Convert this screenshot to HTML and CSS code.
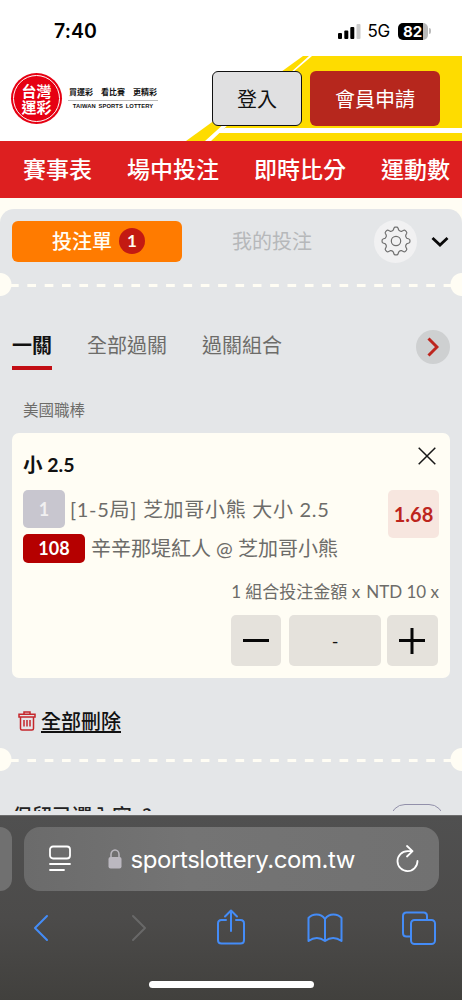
FILE: index.html
```html
<!DOCTYPE html>
<html lang="zh-Hant">
<head>
<meta charset="utf-8">
<meta name="viewport" content="width=device-width">
<title>台灣運彩</title>
<link rel="stylesheet" href="styles.css">
</head>
<body>
<div class="phone">
  <div class="status">
    <span class="time">7:40</span>
    <span class="signals">
      <svg class="bars" width="24" height="15" viewBox="0 0 24 15"><rect x="1" y="9" width="4" height="6" rx="1"/><rect x="7.3" y="6.5" width="4" height="8.5" rx="1"/><rect x="13.3" y="3" width="4" height="12" rx="1"/><rect x="19.5" y="0" width="4" height="15" rx="1" fill="#ccc"/></svg>
      <span class="net">5G</span>
      <span class="battery"><span class="level">82</span></span><i class="cap"></i>
    </span>
  </div>

  <header class="header">
    <svg class="stripes" width="462" height="85" viewBox="0 0 462 85"><path d="M303 0H462V85H186Z" fill="#fedc00"/><path d="M309 0H312L292 17 231 66 211 85H205L226 66 290 17Z" fill="#fff"/><path d="M225 72H462V77H217Z" fill="#fff"/></svg>
    <div class="logo">
      <div class="seal"><div class="seal-text"><span>台灣</span><span>運彩</span></div></div>
      <div class="slogan"><div class="zh"><span>買運彩</span><span>看比賽</span><span>更精彩</span></div><div class="en">TAIWAN SPORTS LOTTERY</div></div>
    </div>
    <button class="login">登入</button>
    <button class="join">會員申請</button>
  </header>

  <nav class="nav"><span>賽事表</span><span>場中投注</span><span>即時比分</span><span>運動數</span></nav>

  <main class="slip">
    <div class="top">
      <div class="bet-tab">投注單<b>1</b></div>
      <div class="my-bets">我的投注</div>
      <div class="gear"><svg width="30" height="30" viewBox="-15 -15 30 30" fill="none" stroke="#707070" stroke-width="1.200" stroke-linejoin="round"><circle r="4.700"/><path d="M-2.800 -10.800L-2 -13Q-1.700 -13.900 -.8 -13.900H.8Q1.700 -13.900 2 -13L2.800 -10.800Q4.200 -9.300 5.800 -9.700L7.800 -10.700Q8.700 -11 9.400 -10.300L10.300 -9.400Q11 -8.700 10.700 -7.800L9.700 -5.800Q9.300 -4.200 10.800 -2.800L13 -2Q13.900 -1.700 13.900 -.8V.8Q13.900 1.700 13 2L10.800 2.800Q9.300 4.200 9.700 5.800L10.700 7.800Q11 8.700 10.300 9.400L9.400 10.300Q8.700 11 7.800 10.700L5.800 9.700Q4.200 9.300 2.800 10.800L2 13Q1.700 13.900 .8 13.900H-.8Q-1.700 13.900 -2 13L-2.800 10.800Q-4.200 9.300 -5.800 9.700L-7.800 10.700Q-8.700 11 -9.400 10.300L-10.300 9.400Q-11 8.700 -10.700 7.800L-9.700 5.800Q-9.300 4.200 -10.800 2.800L-13 2Q-13.900 1.700 -13.900 .8V-.8Q-13.900 -1.700 -13 -2L-10.800 -2.800Q-9.300 -4.200 -9.700 -5.800L-10.700 -7.800Q-11 -8.700 -10.300 -9.400L-9.400 -10.300Q-8.700 -11 -7.800 -10.700L-5.800 -9.700Q-4.200 -9.300 -2.800 -10.800Z"/></svg></div>
      <svg class="chev" width="18" height="12" viewBox="0 0 18 12"><path d="M1.500 2 9 9 16.500 2" fill="none" stroke="#090909" stroke-width="2.800"/></svg>
    </div>
    <div class="perforation"></div>
    <div class="types"><span class="active">一關</span><span>全部過關</span><span>過關組合</span><div class="next"><svg width="12" height="20" viewBox="0 0 12 20"><path d="M1.500 1.500 10 10 1.500 18.500" fill="none" stroke="#bd261f" stroke-width="3"/></svg></div></div>
    <div class="league">美國職棒</div>
    <section class="card">
      <div class="pick"><h2>小 2.5</h2><svg width="18" height="18" viewBox="0 0 18 18"><path d="M.7.7 17.300 17.300M17.300.7.7 17.300" stroke="#171717" stroke-width="1.500"/></svg></div>
      <div class="game">
        <div class="lines">
          <div class="line"><span class="num gray">1</span><span class="market">[1-5局] 芝加哥小熊 大小 2.5</span></div>
          <div class="line second"><span class="num red">108</span><span class="teams">辛辛那堤紅人 @ 芝加哥小熊</span></div>
        </div>
        <span class="odds">1.68</span>
      </div>
      <div class="amount"><span class="combo">1 組合投注金額 x</span><span class="unit">NTD 10 x</span></div>
      <div class="stepper">
        <span class="step"><svg width="26" height="26" viewBox="0 0 26 26"><path d="M0 12.500H26" stroke="#070707" stroke-width="3"/></svg></span>
        <span class="value">-</span>
        <span class="step"><svg width="26" height="26" viewBox="0 0 26 26"><path d="M0 12.500H26M13 0V26" stroke="#070707" stroke-width="3"/></svg></span>
      </div>
    </section>
    <div class="delete"><svg width="18" height="20" viewBox="0 0 18 20" fill="none" stroke="#c5262b" stroke-width="1.500"><path d="M1 6V3.200H17V6ZM6 3V1H12V3M2.500 6V17.500Q2.500 19 4 19H14Q15.500 19 15.500 17.500V6M6 9V15.500M9 9V15.500M12 9V15.500"/></svg><span>全部刪除</span></div>
    <div class="perforation"></div>
    <div class="keep"><span>保留已選內容</span><span class="mark">?</span><i></i></div>
  </main>

  <footer class="browser">
    <div class="address-row">
      <div class="prev-page"></div>
      <div class="address">
        <svg class="menu" width="22" height="28" viewBox="0 0 22 28" fill="none" stroke="#fff" stroke-width="1.800" stroke-linecap="round"><rect x="1" y="1.500" width="20" height="12" rx="3"/><path d="M1 19H21M1 25H15"/></svg>
        <svg class="lock" width="14" height="20" viewBox="0 0 14 20"><rect x=".5" y="8" width="13" height="11.500" rx="2" fill="#bbb8c0"/><path d="M3 9V5.500a4 4.500 0 0 1 8 0V9" fill="none" stroke="#bbb8c0" stroke-width="1.500"/></svg>
        <span class="url">sportslottery.com.tw</span>
        <svg class="reload" width="23" height="28" viewBox="0 0 23 28" fill="none" stroke="#fff" stroke-width="1.800" stroke-linecap="round" stroke-linejoin="round"><path d="M16 6.100H11.500A10 10 0 1 0 21.500 16M11 1 16.500 6.200 11 11.500"/></svg>
      </div>
    </div>
    <div class="tools">
      <svg width="16" height="28" viewBox="0 0 16 28"><path d="M14 2 2 14 14 26"/></svg>
      <svg class="dim" width="16" height="28" viewBox="0 0 16 28"><path d="M2 2 14 14 2 26"/></svg>
      <svg class="share" width="30" height="36" viewBox="-1 0 30 36"><path d="M9 11H4.500Q1 11 1 14.500V31Q1 34.500 4.500 34.500H23.500Q27 34.500 27 31V14.500Q27 11 23.500 11H19M14 22V1.500M8 7.500 14 1.500 20 7.500"/></svg>
      <svg class="book" width="36" height="30" viewBox="0 0 36 30"><path d="M18 6Q15 1.500 9.500 1.500 4.500 1.500 1.500 5V28Q10 22 18 28V6Q21 1.500 26.500 1.500 31.500 1.500 34.500 5V28Q26 22 18 28"/></svg>
      <svg class="windows" width="34" height="34" viewBox="0 0 34 34"><path d="M8.500 25.500H4.500Q1 25.500 1 22V5Q1 1.500 4.500 1.500H21.500Q25 1.500 25 5V8.500"/><rect x="9" y="9" width="24" height="24" rx="3.500"/></svg>
    </div>
    <div class="home"></div>
  </footer>
</div>
</body>
</html>
```
FILE: styles.css
```css
* { box-sizing: border-box; }
body { margin: 0; font-family: Lato, "Noto Sans CJK TC", sans-serif; color: #6d6c69; }
svg { display: block; flex: none; }
.phone { width: 462px; height: 1000px; overflow: hidden; background: #fffdf4; display: flex; flex-direction: column; white-space: nowrap; }
.phone > * { flex: none; }

.status { height: 56px; padding: 21px 31px 0 54px; background: #fff; display: flex; justify-content: space-between; color: #000; font-family: Inter, sans-serif; }
.time { font-size: 19.500px; line-height: 21px; font-weight: 600; letter-spacing: .1px; }
.signals { display: flex; height: 20px; align-items: center; }
.net { margin: 0 8px 0 7px; font-size: 17px; letter-spacing: -.3px; }
.battery { width: 30px; height: 17px; border-radius: 5px; background: linear-gradient(90deg, #000 25px, #b9b9b9 25px); color: #fff; }
.level { display: block; padding-left: 5px; font-size: 15px; line-height: 17px; font-weight: 700; }
.cap { width: 2px; height: 6px; margin-left: 1px; border-radius: 0 2px 2px 0; background: #bbb; }

.header { position: relative; height: 85px; padding: 15px 22px 0 11px; background: #fff; display: flex; align-items: flex-start; }
.stripes { position: absolute; left: 0; top: 0; }
.logo { position: relative; width: 201px; display: flex; align-items: center; gap: 6px; padding-top: 2px; }
.seal { width: 51px; height: 51px; padding: 2px; border-radius: 50%; background: #e60012; }
.seal-text { height: 47px; border: 1px solid #fff; border-radius: 50%; color: #fff; font-size: 15px; font-weight: 700; display: flex; flex-direction: column; align-items: center; justify-content: center; }
.seal-text span { height: 16px; line-height: 16px; }
.slogan { width: 90px; color: #111; }
.zh { display: flex; justify-content: space-between; padding: 0 1px 2px; border-bottom: 1.500px solid #bbb; font-size: 8px; line-height: 11px; font-weight: 700; }
.en { padding-top: 2px; text-align: center; font: 700 5.800px/7px "Liberation Sans", sans-serif; letter-spacing: .1px; word-spacing: 1px; }
button { position: relative; padding: 0; font: 20px/50px Lato, "Noto Sans CJK TC", sans-serif; border-radius: 6px; }
.login { width: 90px; height: 55px; border: 1.500px solid #111; background: #e0e0e1; color: #111; }
.join { width: 130px; height: 55px; margin-left: 8px; border: 0; background: #b6271d; color: #fff; }

.nav { height: 57px; padding: 0 12px 4px 23px; display: flex; align-items: center; justify-content: space-between; background: #dd1f20; color: #fff; font-size: 23px; font-weight: 500; }

.slip { height: 606px; margin-top: 11px; border-radius: 14px 14px 0 0; background: #e4e6e8; overflow: hidden; }
.top { height: 64px; padding: 0 13px 0 12px; display: flex; align-items: center; }
.bet-tab { width: 170px; height: 41px; border-radius: 6px; background: #ff7b00; color: #fffdf4; display: flex; align-items: center; justify-content: center; gap: 7px; padding: 0 0 1px 3px; font-size: 20px; font-weight: 500; }
.bet-tab b { width: 26px; height: 26px; border-radius: 50%; background: #c31a12; font-size: 17px; line-height: 26px; font-weight: 700; text-align: center; }
.my-bets { margin-left: 50px; padding-bottom: 1px; color: #b6b8ba; font-size: 20px; }
.gear { width: 43px; height: 43px; margin-left: 62px; border-radius: 50%; background: #f1f1f2; display: grid; place-items: center; }
.chev { margin-left: 14px; margin-top: 2px; }
.perforation { height: 23px; background: radial-gradient(circle at 0 50%, #fffdf4 11px, transparent 12px), radial-gradient(circle at 100% 50%, #fffdf4 11px, transparent 12px), linear-gradient(90deg, #fffdf4 9px, transparent 9px) 10px 11px / 17.350px 3px repeat-x; }
.types { height: 74px; margin-top: 33px; padding: 0 12px; display: flex; align-items: flex-start; gap: 35px; font-size: 20px; line-height: 33px; }
.active { height: 41px; border-bottom: 4px solid #c20e14; color: #111; font-weight: 700; }
.next { width: 34px; height: 34px; margin: 1px 0 0 auto; border-radius: 50%; background: #ced0d1; display: grid; place-items: center; }
.league { height: 30px; padding-left: 23px; font-size: 15.500px; line-height: 14px; }
.card { height: 245px; margin: 0 12px; padding: 14px 11px 12px; border-radius: 7px; background: #fffdf4; }
.pick { height: 43px; display: flex; justify-content: space-between; }
.pick svg { margin: 0 3px 0 0; }
h2 { margin: 3px 0 0; color: #111; font-size: 19.500px; line-height: 29px; font-weight: 700; }
.game { display: flex; justify-content: space-between; }
.line { height: 38px; display: flex; align-items: center; font-size: 20px; }
.second { height: 30px; margin-top: 5px; }
.num { border-radius: 5px; color: #fff; font-size: 18px; font-weight: 700; text-align: center; }
.gray { width: 42px; height: 38px; background: #c8c6cf; color: #f1f0f1; line-height: 38px; }
.red { width: 62px; height: 29px; background: #b50000; line-height: 29px; }
.market { margin-left: 5px; padding-bottom: 1px; letter-spacing: .7px; }
.teams { margin-left: 6px; padding-bottom: 2px; }
.odds { width: 51px; height: 48px; border-radius: 5px; background: #f7e6df; color: #bd251d; text-align: center; font-size: 20px; line-height: 49px; font-weight: 700; }
.amount { height: 24px; margin-top: 17px; display: flex; justify-content: flex-end; gap: 6px; font-size: 17px; line-height: 23px; }
.stepper { margin-top: 11px; display: flex; justify-content: flex-end; gap: 6px; padding-right: 1.500px; }
.step, .value { height: 51px; border-radius: 5px; background: #e5e2dc; display: grid; place-items: center; color: #111; }
.step { width: 50.500px; }
.value { width: 92px; margin-left: 2px; font-size: 18px; }
.delete { height: 70px; padding: 28px 0 0 18px; display: flex; gap: 5px; color: #111; font-size: 20px; line-height: 31px; font-weight: 500; }
.delete svg { margin-top: 5px; }
.delete span { text-decoration: underline; text-underline-offset: 2px; text-decoration-thickness: 1.500px; }
.keep { height: 40px; padding: 33px 18px 0 12px; overflow: hidden; display: flex; color: #222; font-size: 20px; line-height: 25px; font-weight: 500; }
.mark { margin-left: 10px; font-family: "Noto Sans CJK TC", sans-serif; line-height: 24px; }
.keep i { width: 54px; height: 30px; flex: none; margin-left: auto; border: 1.500px solid #9290aa; border-radius: 16px; }

.browser { position: relative; height: 186px; padding-top: 11px; background: linear-gradient(#505050, #4c4b4a 55%, #41403d); border-top: 1px solid #6d6d6d; }
.address-row { display: flex; gap: 12px; height: 64px; }
.prev-page { width: 11.500px; border-radius: 0 15px 15px 0; background: #707070; }
.address { width: 415px; padding: 0 20px 0 25px; border-radius: 16px; background: linear-gradient(90deg, #6b6b6b, #747474 40%, #717171); display: flex; align-items: center; color: #fff; }
.lock { margin-left: 37px; }
.url { margin-left: 9px; font: 24px Inter, sans-serif; letter-spacing: -.43px; }
.reload { margin-left: auto; }
.tools { height: 74px; padding-left: 33px; display: flex; align-items: center; }
.tools svg { fill: none; stroke: #448cf7; stroke-width: 2; stroke-linecap: round; stroke-linejoin: round; }
.tools .dim { margin-left: 82px; stroke: #686868; }
.tools .share { margin: 0 0 3px 69px; }
.tools .book { margin-left: 61px; }
.tools .windows { margin-left: 59px; }
.home { width: 165px; height: 7px; margin: 16px auto 0; border-radius: 4px; background: #fff; }
```
